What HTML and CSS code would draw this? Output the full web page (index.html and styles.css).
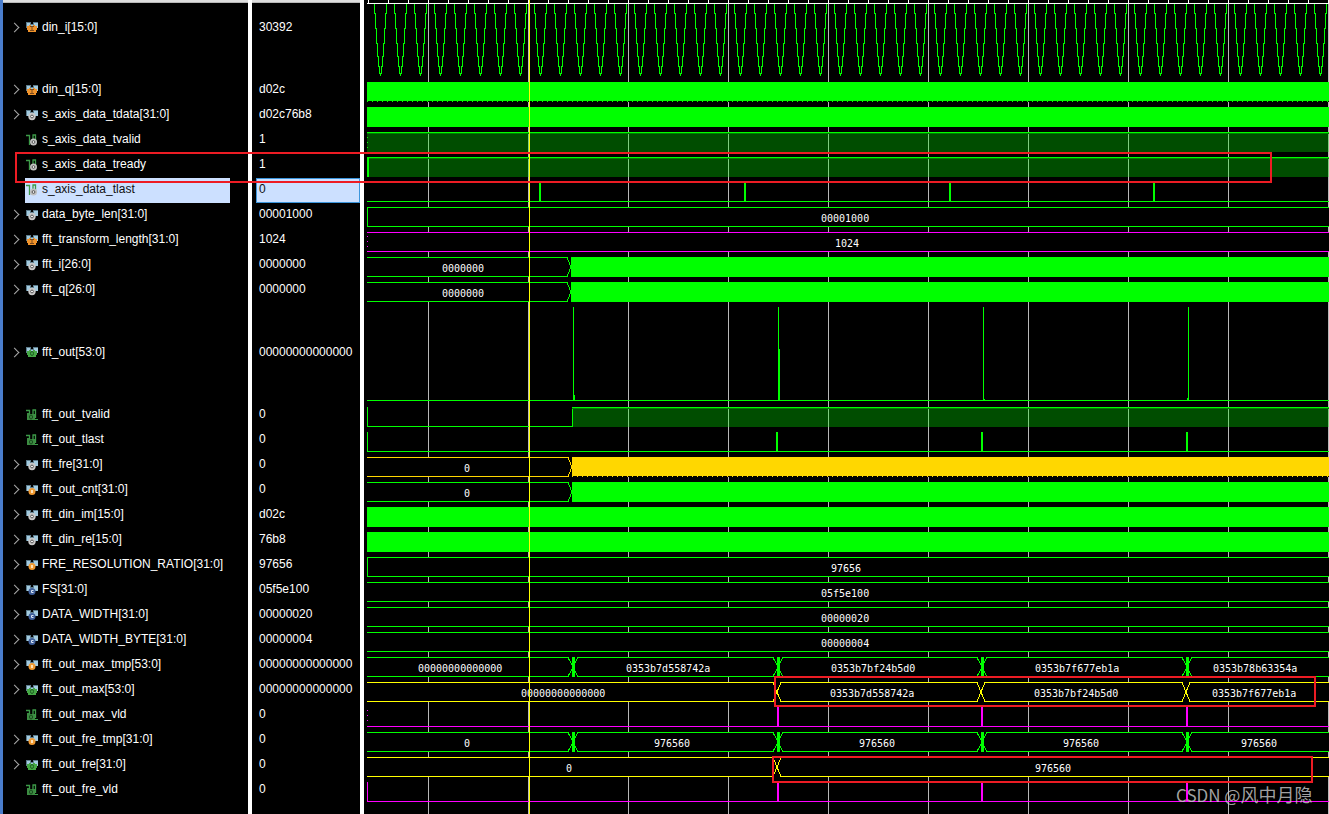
FILE: index.html
```html
<!DOCTYPE html>
<html lang="en">
<head>
<meta charset="utf-8">
<title>Waveform viewer</title>
<link rel="stylesheet" href="styles.css">
</head>
<body>
<svg class="defs" aria-hidden="true">
  <symbol id="bus" viewBox="0 0 12 12">
    <path fill="#5d7c8c" d="M0 1h5v2h2V1h5v6H0z"/><path fill="#a3cbe0" d="M1 2h3v5H1zM8 2h4v5H8zM4 4h4v3H4z"/>
  </symbol>
  <symbol id="bus-in" viewBox="0 0 12 12">
    <use href="#bus"/><path fill="#f0932b" d="M1 5h2V4h2v1h2V4h2v1h2v4h-1v2H2V9H1z"/><path stroke="#7a4a1c" fill="none" d="M4 5.500h4M6 5.500v4M4 9.500h4"/>
  </symbol>
  <symbol id="bus-out" viewBox="0 0 12 12">
    <use href="#bus"/><path fill="#45a845" d="M1 5h2V4h2v1h2V4h2v1h2v4h-1v2H2V9H1z"/><ellipse cx="6" cy="7.500" rx="1.500" ry="2" stroke="#1d5c22" fill="none"/>
  </symbol>
  <symbol id="bus-wire" viewBox="0 0 12 12">
    <use href="#bus"/><circle cx="6" cy="7.500" r="3.700" fill="#c8c8c8"/><circle cx="6" cy="7.500" r="1.400" fill="#fff" stroke="#555"/>
  </symbol>
  <symbol id="bus-reg" viewBox="0 0 12 12">
    <use href="#bus"/><circle cx="6" cy="7.500" r="3.500" fill="#f09a32"/><path fill="#fde2b8" d="M5 6h2v3H5z"/>
  </symbol>
  <symbol id="bus-const" viewBox="0 0 12 12">
    <use href="#bus"/><circle cx="6" cy="7.500" r="3.500" fill="#3f5f9a"/><path stroke="#dce6f5" fill="none" d="M7.500 6.500h-2v2h2"/>
  </symbol>
  <symbol id="bit" viewBox="0 0 12 12">
    <path stroke="#3c9a48" fill="none" stroke-width="1.300" d="M0 1.500h3.500v9.500M7 8V.5M6.500 1h3v8"/>
  </symbol>
  <symbol id="bit-wire" viewBox="0 0 12 12">
    <use href="#bit"/><circle cx="7.500" cy="8" r="3.500" fill="#c0c0c0"/><circle cx="7.500" cy="8" r="1.400" fill="#eee" stroke="#555"/>
  </symbol>
  <symbol id="bit-out" viewBox="0 0 12 12">
    <use href="#bit"/><path stroke="#3c9a48" d="M8 10.500h4"/><path fill="#3c8c42" d="M1 4h2v1h6v6H1z"/><ellipse cx="5" cy="8" rx="1.500" ry="2" stroke="#18481c" fill="none"/>
  </symbol>
</svg>
<main class="viewer">
  <section class="pane names" aria-label="Signal names">
    <ul class="rows" id="names">
      <li class="row row-first"><button class="twist" aria-label="Expand"></button><svg class="icon"><use href="#bus-in"/></svg><span>din_i[15:0]</span></li>
      <li class="row"><button class="twist" aria-label="Expand"></button><svg class="icon"><use href="#bus-in"/></svg><span>din_q[15:0]</span></li>
      <li class="row"><button class="twist" aria-label="Expand"></button><svg class="icon"><use href="#bus-wire"/></svg><span>s_axis_data_tdata[31:0]</span></li>
      <li class="row leaf"><svg class="icon"><use href="#bit-wire"/></svg><span>s_axis_data_tvalid</span></li>
      <li class="row leaf"><svg class="icon"><use href="#bit-wire"/></svg><span>s_axis_data_tready</span></li>
      <li class="row leaf selected"><svg class="icon"><use href="#bit-wire"/></svg><span>s_axis_data_tlast</span></li>
      <li class="row"><button class="twist" aria-label="Expand"></button><svg class="icon"><use href="#bus-wire"/></svg><span>data_byte_len[31:0]</span></li>
      <li class="row"><button class="twist" aria-label="Expand"></button><svg class="icon"><use href="#bus-in"/></svg><span>fft_transform_length[31:0]</span></li>
      <li class="row"><button class="twist" aria-label="Expand"></button><svg class="icon"><use href="#bus-wire"/></svg><span>fft_i[26:0]</span></li>
      <li class="row"><button class="twist" aria-label="Expand"></button><svg class="icon"><use href="#bus-wire"/></svg><span>fft_q[26:0]</span></li>
      <li class="row row-tall"><button class="twist" aria-label="Expand"></button><svg class="icon"><use href="#bus-out"/></svg><span>fft_out[53:0]</span></li>
      <li class="row leaf"><svg class="icon"><use href="#bit-out"/></svg><span>fft_out_tvalid</span></li>
      <li class="row leaf"><svg class="icon"><use href="#bit-out"/></svg><span>fft_out_tlast</span></li>
      <li class="row"><button class="twist" aria-label="Expand"></button><svg class="icon"><use href="#bus-wire"/></svg><span>fft_fre[31:0]</span></li>
      <li class="row"><button class="twist" aria-label="Expand"></button><svg class="icon"><use href="#bus-reg"/></svg><span>fft_out_cnt[31:0]</span></li>
      <li class="row"><button class="twist" aria-label="Expand"></button><svg class="icon"><use href="#bus-wire"/></svg><span>fft_din_im[15:0]</span></li>
      <li class="row"><button class="twist" aria-label="Expand"></button><svg class="icon"><use href="#bus-wire"/></svg><span>fft_din_re[15:0]</span></li>
      <li class="row"><button class="twist" aria-label="Expand"></button><svg class="icon"><use href="#bus-reg"/></svg><span>FRE_RESOLUTION_RATIO[31:0]</span></li>
      <li class="row"><button class="twist" aria-label="Expand"></button><svg class="icon"><use href="#bus-const"/></svg><span>FS[31:0]</span></li>
      <li class="row"><button class="twist" aria-label="Expand"></button><svg class="icon"><use href="#bus-const"/></svg><span>DATA_WIDTH[31:0]</span></li>
      <li class="row"><button class="twist" aria-label="Expand"></button><svg class="icon"><use href="#bus-const"/></svg><span>DATA_WIDTH_BYTE[31:0]</span></li>
      <li class="row"><button class="twist" aria-label="Expand"></button><svg class="icon"><use href="#bus-reg"/></svg><span>fft_out_max_tmp[53:0]</span></li>
      <li class="row"><button class="twist" aria-label="Expand"></button><svg class="icon"><use href="#bus-out"/></svg><span>fft_out_max[53:0]</span></li>
      <li class="row leaf"><svg class="icon"><use href="#bit-out"/></svg><span>fft_out_max_vld</span></li>
      <li class="row"><button class="twist" aria-label="Expand"></button><svg class="icon"><use href="#bus-reg"/></svg><span>fft_out_fre_tmp[31:0]</span></li>
      <li class="row"><button class="twist" aria-label="Expand"></button><svg class="icon"><use href="#bus-out"/></svg><span>fft_out_fre[31:0]</span></li>
      <li class="row leaf"><svg class="icon"><use href="#bit-out"/></svg><span>fft_out_fre_vld</span></li>
    </ul>
  </section>
  <section class="pane values" aria-label="Signal values">
    <ul class="rows">
      <li class="row row-first">30392</li>
      <li class="row">d02c</li>
      <li class="row">d02c76b8</li>
      <li class="row">1</li>
      <li class="row">1</li>
      <li class="row selected">0</li>
      <li class="row">00001000</li>
      <li class="row">1024</li>
      <li class="row">0000000</li>
      <li class="row">0000000</li>
      <li class="row row-tall">00000000000000</li>
      <li class="row">0</li>
      <li class="row">0</li>
      <li class="row">0</li>
      <li class="row">0</li>
      <li class="row">d02c</li>
      <li class="row">76b8</li>
      <li class="row">97656</li>
      <li class="row">05f5e100</li>
      <li class="row">00000020</li>
      <li class="row">00000004</li>
      <li class="row">00000000000000</li>
      <li class="row">00000000000000</li>
      <li class="row">0</li>
      <li class="row">0</li>
      <li class="row">0</li>
      <li class="row">0</li>
    </ul>
  </section>
  <section class="waves" aria-label="Waveforms"><svg class="plot" id="plot"></svg></section>
  <div class="mark mark-ready"></div>
  <div class="mark mark-max"></div>
  <div class="mark mark-fre"></div>
  <p class="credit">CSDN @<span class="author">风中月隐</span></p>
</main>
<script src="waves.js"></script>
</body>
</html>
```
FILE: styles.css
```css
* { box-sizing: border-box; }

body {
  margin: 0;
  background: #000;
  color: #fff;
  font: 12px/23px "Liberation Sans", Arial, sans-serif;
}

.defs { position: absolute; width: 0; height: 0; }

.viewer {
  position: relative;
  display: grid;
  grid-template-columns: 252px 112px minmax(0, 1fr);
  min-height: 100vh;
  overflow: hidden;
}

.pane {
  border-right: 4px solid #fff;
  background: linear-gradient(#dedede 2px, #b8b8b8 2px, #b8b8b8 3px, #000 3px);
  padding-top: 3px;
}

.names { border-left: 3px solid #4a7dcc; }

.rows { margin: 0; padding: 0; list-style: none; }

.row {
  display: flex;
  align-items: center;
  height: 25px;
  padding-bottom: 2px;
  white-space: nowrap;
}

.row-first { height: 75px; padding-bottom: 27px; }
.row-tall { height: 100px; }

.names .row { padding-left: 7px; }
.names .leaf { margin: 0 18px 0 22px; padding-left: 1px; }
.values .row { padding-left: 7px; }

.row.selected { background: #cce0ff; color: #111; }
.values .selected { margin-left: 4px; padding-left: 2px; border: 1px solid #3c96dc; }

.twist {
  width: 16px;
  height: 16px;
  padding: 0 8px 0 0;
  border: 0;
  background: none;
  display: grid;
  place-items: center;
}

.twist::before {
  content: "";
  width: 6px;
  height: 6px;
  border: solid #aaa;
  border-width: 1px 1px 0 0;
  transform: rotate(45deg);
}

.icon { width: 12px; height: 12px; margin-right: 4px; flex: none; }

.waves { background: #000; }
.plot { display: block; width: 100%; height: 100%; shape-rendering: crispEdges; }

.plot text {
  fill: #fff;
  font: 10px "DejaVu Sans Mono", monospace;
}

.green { --ink: #0f0; }
.gold { --ink: #ffd700; }
.yellow { --ink: #ff0; }
.magenta { --ink: #f0f; }
.solid { fill: var(--ink); }
.line { fill: none; stroke: var(--ink); }
.dots { fill: none; stroke: var(--ink); stroke-dasharray: 1 4; }
.mask { fill: #000; }
.grid { fill: #b8b8b8; }
.axis { fill: #fff; }
.high { fill: rgba(0, 255, 0, 0.3); }
.edge { fill: #008000; }

.mark { position: absolute; border: 2px solid #ed1c24; }
.mark-ready { left: 15px; top: 152px; width: 1257px; height: 31px; }
.mark-max { left: 774px; top: 676px; width: 542px; height: 31px; }
.mark-fre { left: 772px; top: 756px; width: 541px; height: 27px; }

.credit {
  position: absolute;
  left: 1176px;
  top: 782px;
  margin: 0;
  font: 17px/24px "Noto Sans CJK SC", sans-serif;
  color: rgba(205, 205, 205, 0.8);
  white-space: nowrap;
}

.author { font-size: 18px; }
```
FILE: waves.js
```js
const plot = document.getElementById("plot");
const ORIGIN = 364;
const START = 3;
const END = Math.max(plot.clientWidth, 965);
const out = [];

const rect = (cls, x, y, w, h) =>
  out.push(`<rect class="${cls}" x="${x}" y="${y}" width="${w}" height="${h}"/>`);
const path = (cls, d) => out.push(`<path class="${cls}" d="${d}"/>`);
const at = (x) => x - ORIGIN;
const label = (text, x, top) =>
  out.push(`<text x="${at(x)}" y="${top + 19}">${text}</text>`);

// Time grid and ruler
for (let x = at(428); x < END; x += 100) rect("grid", x, 4, 1, 810);
rect("axis", START, 3, END, 1);
for (let x = at(368); x < END; x += 20) rect("axis", x, 0, 1, 3);

function solid(color, top, from = 367, height = 20) {
  rect("mask", at(from), top + 4, END, 20);
  rect(`${color} solid`, at(from), top + 4, END, height);
  if (height < 20) path(`${color} dots`, `M${at(from)} ${top + 23.5}H${END}`);
}

// Bus row: cells joined by crossings at the given x positions
function bus(color, top, crossings, labels, options = {}) {
  const { end = END, dense = false, left = "none", half = 4 } = options;
  rect("mask", START, top + 4, end - START, 20);
  const a = top + 4.5, m = top + 14, b = top + 23.5;
  let x = START;
  for (const c of crossings) {
    const p = at(c);
    path(`${color} line`, `M${x} ${a}H${p - half}L${p + half} ${b}M${x} ${b}H${p - half}L${p + half} ${a}`);
    if (dense) rect(`${color} solid`, p - 1, top + 4, 3, 20);
    x = p + half;
  }
  path(`${color} line`, end < END
    ? `M${x} ${a}H${end - 4}L${end} ${m}L${end - 4} ${b}H${x}`
    : `M${x} ${a}H${end}M${x} ${b}H${end}`);
  if (left === "line") path(`${color} line`, `M3.5 ${top + 4}V${top + 24}`);
  if (left === "dots") path(`${color} dots`, `M3.5 ${top + 8}V${top + 24}`);
  labels.forEach(([text, tx]) => label(text, tx, top));
}

function high(top, from) {
  rect("high", at(from), top + 4, END, 20);
  rect("edge", at(from), top + 5, END, 1);
  rect("green solid", at(from), top + 4, END, 1);
}

function low(color, top, pulses, left = false) {
  rect(`${color} solid`, START, top + 23, END, 1);
  if (left) rect(`${color} solid`, START, top + 4, 1, 20);
  pulses.forEach((x) => rect(`${color} solid`, at(x), top + 4, 2, 20));
}

// Analog trace as pixel columns, clipped by the ruler
const level = (x) => Math.round(28 + 47 * Math.cos((2 * Math.PI * (x - at(380))) / 20));
for (let x = START + 4; x < END; x++) {
  const y = level(x);
  const outer = Math.max(4, Math.min(level(x - 1), level(x + 1)));
  if (y >= 4) rect("green solid", x, Math.min(outer, y), 1, Math.max(1, y - outer + 1));
}

solid("green", 78, 367, 19);
solid("green", 103);
high(128, 367);
path("green dots", "M3.5 132V152");
high(153, 367);
rect("green solid", START, 157, 2, 20);
low("green", 178, [539, 744, 949, 1153]);
bus("green", 203, [], [["00001000", 821]], { left: "line" });
bus("magenta", 228, [], [["1024", 835]], { left: "dots" });

for (const top of [253, 278]) {
  bus("green", top, [], [["0000000", 442]], { end: at(571) });
  solid("green", top, 571);
}

rect("green solid", START, 400, END, 1);
[573, 778, 983, 1188].forEach((x) => rect("green solid", at(x), 307, 1, 94));
rect("green solid", at(574), 395, 1, 5);
rect("green solid", at(779), 349, 1, 51);
rect("green solid", at(984), 399, 1, 1);
rect("green solid", at(1187), 398, 1, 2);

path("green line", `M3.500 407V426.500H${at(572) + 0.5}V407`);
high(403, 572);
low("green", 428, [776, 981, 1186], true);

bus("gold", 453, [], [["0", 464]], { end: at(572) });
solid("gold", 453, 572, 19);
bus("green", 478, [], [["0", 464]], { end: at(572) });
solid("green", 478, 572);
solid("green", 503);
solid("green", 528);
bus("green", 553, [], [["97656", 831]], { left: "line" });
bus("green", 578, [], [["05f5e100", 821]]);
bus("green", 603, [], [["00000020", 821]]);
bus("green", 628, [], [["00000004", 821]]);

bus("green", 653, [573, 778, 982, 1187], [
  ["00000000000000", 418], ["0353b7d558742a", 626], ["0353b7bf24b5d0", 831],
  ["0353b7f677eb1a", 1035], ["0353b78b63354a", 1213]
], { dense: true, half: 5 });
bus("yellow", 678, [777, 981, 1186], [
  ["00000000000000", 521], ["0353b7d558742a", 830], ["0353b7bf24b5d0", 1034], ["0353b7f677eb1a", 1212]
]);
low("magenta", 703, [777, 981, 1186]);
path("magenta dots", "M3.5 710V724");
bus("green", 728, [573, 778, 982, 1187], [
  ["0", 464], ["976560", 654], ["976560", 859], ["976560", 1063], ["976560", 1241]
], { dense: true, half: 5 });
bus("yellow", 753, [777], [["0", 566], ["976560", 1035]]);
low("magenta", 778, [777, 981, 1186], true);

// Time cursor
rect("yellow solid", at(529), 0, 1, 814);

plot.innerHTML = out.join("");
```
